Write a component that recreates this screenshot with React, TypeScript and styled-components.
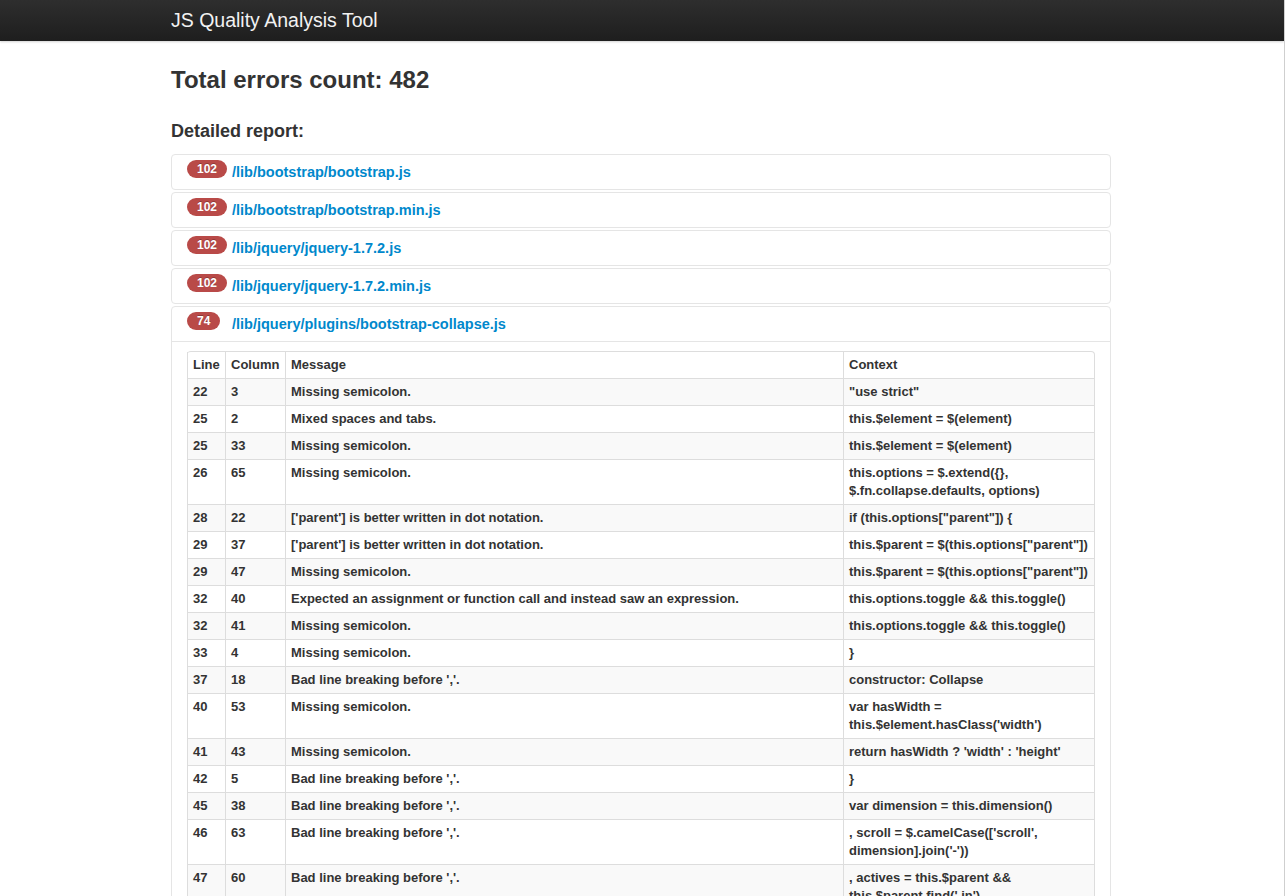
import React from "react";
import styled, { createGlobalStyle } from "styled-components";

const GlobalStyle = createGlobalStyle`
  html {
    border-right: 1px solid #cfcfcf;
  }
  body {
    margin: 0;
    font-family: "Liberation Sans", Arial, Helvetica, sans-serif;
    font-size: 13px;
    line-height: 18px;
    color: #333333;
    background: #ffffff;
  }
`;

const Navbar = styled.header`
  height: 41px;
  background: linear-gradient(to bottom, #2e2e2e, #1e1e1e);
  box-shadow: 0 1px 2px rgba(0, 0, 0, 0.18);
  position: relative;
  z-index: 2;
`;

const Container = styled.div`
  width: 940px;
  padding-right: 2px;
  margin: 0 auto;
`;

const Brand = styled.a`
  display: block;
  padding: 9px 0 0 0;
  font-size: 19.5px;
  line-height: 22px;
  color: #f2f2f2;
  text-decoration: none;
`;

const Main = styled(Container)`
  padding-top: 21px;
`;

const Title = styled.h2`
  margin: 0 0 20px;
  font-size: 24px;
  line-height: 36px;
  font-weight: bold;
  color: #333333;
`;

const Subtitle = styled.h3`
  margin: 0 0 9px;
  font-size: 18px;
  line-height: 27px;
  font-weight: bold;
  color: #333333;
`;

const Group = styled.div`
  border: 1px solid #e5e5e5;
  border-radius: 4px;
  margin-bottom: 2px;
`;

const Heading = styled.div`
  display: flex;
  align-items: flex-start;
  height: 18px;
  padding: 8px 15px;
  line-height: 18px;
`;

const BadgeSlot = styled.span`
  display: flex;
  width: 45px;
  flex: none;
  margin-top: -3px;
`;

const Badge = styled.span`
  display: block;
  padding: 2px 10px;
  font-size: 12px;
  font-weight: bold;
  line-height: 14px;
  color: #ffffff;
  background: #b94a48;
  border-radius: 9px;
  text-shadow: 0 -1px 0 rgba(0, 0, 0, 0.25);
`;

const FileLink = styled.a`
  font-size: 14.5px;
  font-weight: bold;
  line-height: 18px;
  color: #0088cc;
  text-decoration: none;
`;

const Inner = styled.div`
  border-top: 1px solid #e5e5e5;
  padding: 9px 15px;
`;

const Table = styled.table`
  width: 100%;
  border-collapse: separate;
  border-spacing: 0;
  border: 1px solid #dddddd;
  border-left: 0;
  border-radius: 4px;
  font-weight: bold;
`;

const Th = styled.th<{ $w?: number }>`
  text-align: left;
  vertical-align: bottom;
  padding: 4px 5px;
  line-height: 18px;
  border-left: 1px solid #dddddd;
  ${(p) => (p.$w ? `width: ${p.$w}px;` : "")}
`;

const Row = styled.tr`
  &:nth-child(odd) td {
    background: #f9f9f9;
  }
`;

const Td = styled.td`
  text-align: left;
  vertical-align: top;
  padding: 4px 5px;
  line-height: 18px;
  border-left: 1px solid #dddddd;
  border-top: 1px solid #dddddd;
`;

type Err = [number, number, string, string];

const errors: Err[] = [
  [22, 3, "Missing semicolon.", '"use strict"'],
  [25, 2, "Mixed spaces and tabs.", "this.$element = $(element)"],
  [25, 33, "Missing semicolon.", "this.$element = $(element)"],
  [26, 65, "Missing semicolon.", "this.options = $.extend({}, $.fn.collapse.defaults, options)"],
  [28, 22, "['parent'] is better written in dot notation.", 'if (this.options["parent"]) {'],
  [29, 37, "['parent'] is better written in dot notation.", 'this.$parent = $(this.options["parent"])'],
  [29, 47, "Missing semicolon.", 'this.$parent = $(this.options["parent"])'],
  [32, 40, "Expected an assignment or function call and instead saw an expression.", "this.options.toggle && this.toggle()"],
  [32, 41, "Missing semicolon.", "this.options.toggle && this.toggle()"],
  [33, 4, "Missing semicolon.", "}"],
  [37, 18, "Bad line breaking before ','.", "constructor: Collapse"],
  [40, 53, "Missing semicolon.", "var hasWidth = this.$element.hasClass('width')"],
  [41, 43, "Missing semicolon.", "return hasWidth ? 'width' : 'height'"],
  [42, 5, "Bad line breaking before ','.", "}"],
  [45, 38, "Bad line breaking before ','.", "var dimension = this.dimension()"],
  [46, 63, "Bad line breaking before ','.", ", scroll = $.camelCase(['scroll', dimension].join('-'))"],
  [47, 60, "Bad line breaking before ','.", ", actives = this.$parent && this.$parent.find('.in')"],
  [48, 50, "Missing semicolon.", ", hasData"],
  [52, 11, "Missing semicolon.", "actives.collapse('hide')"],
];

const files: [number, string][] = [
  [102, "/lib/bootstrap/bootstrap.js"],
  [102, "/lib/bootstrap/bootstrap.min.js"],
  [102, "/lib/jquery/jquery-1.7.2.js"],
  [102, "/lib/jquery/jquery-1.7.2.min.js"],
  [74, "/lib/jquery/plugins/bootstrap-collapse.js"],
];

function FileGroup({ count, path, open }: { count: number; path: string; open?: boolean }) {
  return (
    <Group>
      <Heading>
        <BadgeSlot>
          <Badge>{count}</Badge>
        </BadgeSlot>
        <FileLink href="#">{path}</FileLink>
      </Heading>
      {open && (
        <Inner>
          <Table>
            <thead>
              <tr>
                <Th $w={27}>Line</Th>
                <Th $w={49}>Column</Th>
                <Th>Message</Th>
                <Th $w={240}>Context</Th>
              </tr>
            </thead>
            <tbody>
              {errors.map((e, i) => (
                <Row key={i}>
                  <Td>{e[0]}</Td>
                  <Td>{e[1]}</Td>
                  <Td>{e[2]}</Td>
                  <Td>{e[3]}</Td>
                </Row>
              ))}
            </tbody>
          </Table>
        </Inner>
      )}
    </Group>
  );
}

export default function App() {
  return (
    <>
      <GlobalStyle />
      <Navbar>
        <Container>
          <Brand href="#">JS Quality Analysis Tool</Brand>
        </Container>
      </Navbar>
      <Main>
        <Title>Total errors count: 482</Title>
        <Subtitle>Detailed report:</Subtitle>
        {files.map(([c, p], i) => (
          <FileGroup key={p} count={c} path={p} open={i === files.length - 1} />
        ))}
      </Main>
    </>
  );
}
